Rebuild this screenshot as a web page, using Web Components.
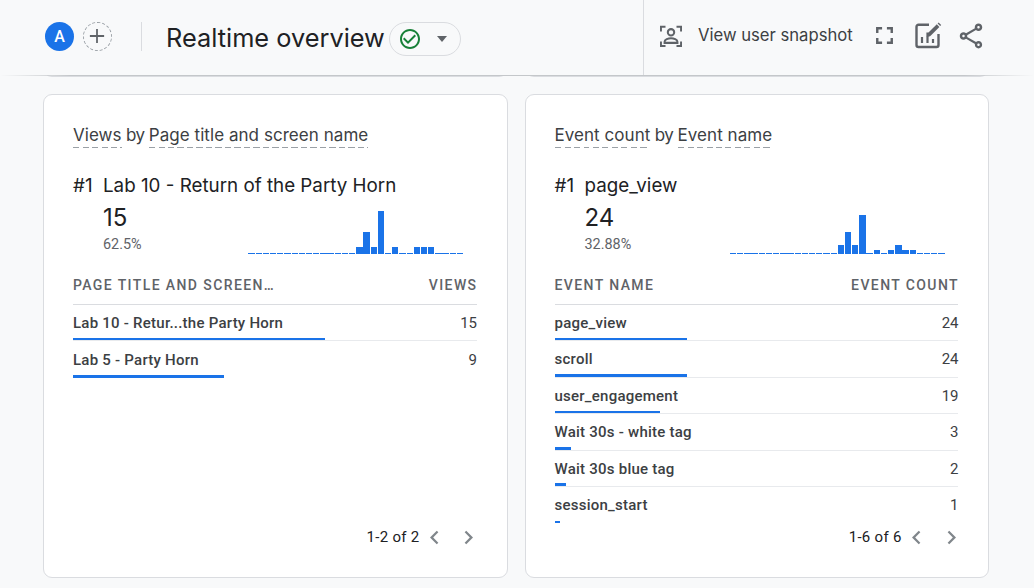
<!DOCTYPE html>
<html lang="en">
<head>
<meta charset="utf-8">
<title>Realtime overview</title>
<style>
  html,body{margin:0;height:588px;overflow:hidden;background:#f8f9fa;font-family:Roboto,sans-serif;}
</style>
</head>
<body>
<ga-header></ga-header>
<ga-main>
  <ga-stub></ga-stub><ga-stub></ga-stub>
  <ga-card metric="Views" dim="Page title and screen name" top="Lab 10 - Return of the Party Horn" value="15" pct="62.5%"
    head1="PAGE TITLE AND SCREEN…" head2="VIEWS" page="1-2 of 2" gap="36" shift="3"
    bars="0,0,0,0,0,0,0,0,0,0,0,0,0,0,0,7,22,7,43,0,7,0,0,7,7,7,0,0,0,0">
    <ga-row label="Lab 10 - Retur...the Party Horn" value="15" share="62.5"></ga-row>
    <ga-row label="Lab 5 - Party Horn" value="9" share="37.5" last></ga-row>
  </ga-card>
  <ga-card metric="Event count" dim="Event name" top="page_view" value="24" pct="32.88%"
    head1="EVENT NAME" head2="EVENT COUNT" page="1-6 of 6" gap="37.3" shift="5"
    bars="0,0,0,0,0,0,0,0,0,0,0,0,0,0,0,9,22,9,39,0,4,0,4,9,4,4,0,0,0,0">
    <ga-row label="page_view" value="24" share="32.88"></ga-row>
    <ga-row label="scroll" value="24" share="32.88"></ga-row>
    <ga-row label="user_engagement" value="19" share="26.03"></ga-row>
    <ga-row label="Wait 30s - white tag" value="3" share="4.11"></ga-row>
    <ga-row label="Wait 30s blue tag" value="2" share="2.74"></ga-row>
    <ga-row label="session_start" value="1" share="1.37" last></ga-row>
  </ga-card>
</ga-main>
<script>
const HEAD='Inter,"Open Sans",sans-serif';
class Base extends HTMLElement{
  render(html){ if(!this.shadowRoot) this.attachShadow({mode:'open'}); this.shadowRoot.innerHTML=html; }
  connectedCallback(){ this.draw(); }
  a(n){ return this.getAttribute(n)||''; }
}
customElements.define('ga-header',class extends Base{draw(){this.render(`<style>
  :host{display:flex;height:75px;position:relative;z-index:2;background:#f8f9fa;color:#202124;font-family:${HEAD};}
  :host::after{content:"";position:absolute;left:0;right:0;top:75px;height:1px;background:linear-gradient(90deg,rgba(189,193,198,0) 0,#c4c7ca 70px,#c4c7ca 964px,rgba(189,193,198,0) 100%);}
  .left{flex:1;display:flex;align-items:center;padding:0 0 0 45px;min-width:0;}
  .right{width:390px;border-left:1px solid #dadce0;display:flex;align-items:center;color:#3c4043;padding-bottom:4px;height:71px;}
  .av{width:29px;height:29px;border-radius:50%;background:#1a73e8;color:#fff;font:500 16px/29px Roboto,sans-serif;text-align:center;margin-top:-3px;}
  .add{width:27px;height:27px;border:1px dashed #9aa0a6;border-radius:50%;margin:-3px 0 0 9px;display:flex;align-items:center;justify-content:center;}
  .div{width:1px;height:29px;background:#dadce0;margin:-3px 24px 0 29px;}
  h1{margin:0;font:400 25.350px/34px ${HEAD};white-space:nowrap;}
  .pill{height:32px;border:1px solid #dadce0;border-radius:17px;margin:3px 0 0 4px;display:flex;align-items:center;padding-left:8px;width:62px;}
  .caret{width:0;height:0;border:5px solid transparent;border-top:6px solid #5f6368;border-bottom:0;margin-left:15px;}
  svg{display:block;flex:none;fill:#5f6368;}
  .snap{margin-left:16px;}
  .txt{font:400 16.650px/24px ${HEAD};margin:-2px 0 0 16px;white-space:nowrap;}
  .fs{margin-left:17px;} .ed{margin-left:16px;} .sh{margin-left:14px;}
</style>
<div class="left">
  <div class="av">A</div>
  <div class="add"><svg width="16" height="16" viewBox="0 0 18 18" style="margin-left:-1px"><path d="M8 1h2v7h7v2h-7v7H8v-7H1V8h7z"/></svg></div>
  <div class="div"></div>
  <h1>Realtime overview</h1>
  <div class="pill"><svg width="24" height="24" viewBox="0 0 24 24" style="fill:#188038"><path d="M16.59 7.58 10 14.17l-3.59-3.58L5 12l5 5 8-8zM12 2C6.48 2 2 6.48 2 12s4.48 10 10 10 10-4.48 10-10S17.520 2 12 2zm0 18c-4.420 0-8-3.580-8-8s3.580-8 8-8 8 3.580 8 8-3.580 8-8 8z"/></svg><span class="caret"></span></div>
</div>
<div class="right">
  <svg class="snap" width="22" height="22" viewBox="0 0 24 24" style="fill:none;stroke:#5f6368;stroke-width:2.200"><path d="M1 7V2h5M18 2h5v5M1 18v5h5M23 18v5h-5"/><circle cx="12" cy="8" r="3.500"/><path d="M5 19.500v-1.200c0-2.400 4-3.800 7-3.800s7 1.400 7 3.800v1.200z"/></svg>
  <span class="txt">View user snapshot</span>
  <svg class="fs" width="29" height="29" viewBox="0 0 24 24"><path d="M7 14H5v5h5v-2H7v-3zm-2-4h2V7h3V5H5v5zm12 7h-3v2h5v-5h-2v3zM14 5v2h3v3h2V5h-5z"/></svg>
  <svg class="ed" width="27" height="27" viewBox="0 0 27 27" style="fill:none;stroke:#5f6368;stroke-width:2.400"><path d="M14 2.700H3.500a2 2 0 0 0-2 2V23a2 2 0 0 0 2 2H21.500a2 2 0 0 0 2-2V12" stroke-linejoin="round"/><path d="M7 21v-6M12.500 21V10.500M18 21v-4" stroke-width="2.200"/><path d="M12.500 11.500 21.800 2.300l2.600 2.600-9.300 9.300-3.400.8z" fill="#5f6368" stroke="none"/><path d="M22.600 1.500l1-1 2.600 2.600-1 1z" fill="#5f6368" stroke="none"/></svg>
  <svg class="sh" width="30" height="30" viewBox="0 0 24 24"><path d="M18 16.080c-.76 0-1.440.3-1.960.77L8.910 12.700c.05-.23.09-.46.09-.7s-.04-.47-.09-.7l7.050-4.110c.54.5 1.250.81 2.040.81 1.660 0 3-1.340 3-3s-1.340-3-3-3-3 1.340-3 3c0 .24.04.47.09.7L8.040 9.810C7.500 9.310 6.790 9 6 9c-1.660 0-3 1.340-3 3s1.340 3 3 3c.79 0 1.500-.31 2.040-.81l7.120 4.160c-.05.21-.08.43-.08.65 0 1.610 1.310 2.920 2.920 2.920 1.610 0 2.920-1.310 2.920-2.920s-1.310-2.920-2.920-2.920zM18 4c.55 0 1 .45 1 1s-.45 1-1 1-1-.45-1-1 .45-1 1-1zM6 13c-.55 0-1-.45-1-1s.45-1 1-1 1 .45 1 1-.45 1-1 1zm12 7.020c-.55 0-1-.45-1-1s.45-1 1-1 1 .45 1 1-.45 1-1 1z"/></svg>
</div>`);}});
customElements.define('ga-main',class extends Base{draw(){this.render(`<style>
  :host{display:grid;grid-template-columns:1fr 1fr;column-gap:17px;padding:0 45px 0 43px;}
</style><slot></slot>`);}});
customElements.define('ga-stub',class extends Base{draw(){this.render(`<style>
  :host{display:block;height:10px;margin:-8px 0 17px;box-sizing:border-box;background:#fff;border:1px solid #dadce0;border-radius:0 0 9px 9px;}
</style>`);}});
customElements.define('ga-spark',class extends Base{draw(){
  const bars=this.a('bars').split(',').map(Number);
  this.render(`<style>
  :host{display:grid;grid-template-columns:repeat(30,7.2px);align-items:end;width:216px;height:44px;margin-left:.4px;}
  i{display:block;width:6.300px;background:#1a73e8;}
</style>${bars.map(h=>`<i style="height:${h||1}px"></i>`).join('')}`);}});
customElements.define('ga-row',class extends Base{draw(){this.render(`<style>
  :host{display:flex;flex-direction:column;height:36.4px;box-sizing:border-box;color:#3c4043;font:15px/20px Roboto,sans-serif;${this.hasAttribute('last')?'':'border-bottom:1px solid #e8eaed;'}}
  .t{flex:1;display:flex;justify-content:space-between;align-items:center;padding-top:3px;}
  b{font-weight:500;white-space:nowrap;letter-spacing:.24px;}
  span{margin-right:-.5px;}
  .bar{height:2.5px;background:#1a73e8;flex:none;}
</style><div class="t"><b>${this.a('label')}</b><span>${this.a('value')}</span></div><div class="bar" style="width:${this.a('share')}%"></div>`);}});
customElements.define('ga-card',class extends Base{draw(){this.render(`<style>
  :host{display:flex;flex-direction:column;height:484px;box-sizing:border-box;background:#fff;border:1px solid #dadce0;border-radius:9px;padding:28px 30px 28px 29px;color:#202124;}
  .title{display:flex;font:400 17px/24px ${HEAD};color:#3c4043;height:25px;white-space:nowrap;}
  .title u{text-decoration:none;height:25px;letter-spacing:.05px;background:repeating-linear-gradient(90deg,#9aa0a6 0 6px,transparent 6px 9.500px) left bottom/100% 1px no-repeat;}
  .title span{white-space:pre;letter-spacing:-.5px;}
  .rank{display:flex;margin-top:26px;font:400 18.800px/24px ${HEAD};white-space:nowrap;}
  .rank span:first-child{width:30px;}
  .stat{display:flex;align-items:flex-end;height:52px;margin-top:4px;padding-left:30px;}
  .nums{width:145px;flex:none;align-self:flex-start;}
  .num{font:400 24px/32px ${HEAD};}
  .pct{font:400 14.400px/20px Roboto,sans-serif;color:#5f6368;margin-top:1px;}
  .hd{display:flex;justify-content:space-between;align-items:flex-end;height:51px;box-sizing:border-box;padding-bottom:9px;border-bottom:1px solid #dadce0;font:500 14px/20px Roboto,sans-serif;letter-spacing:1.400px;color:#5f6368;white-space:nowrap;}
  .hd span:last-child{margin-right:-1px;}
  .ft{margin-top:auto;height:24px;display:flex;align-items:center;justify-content:flex-end;font:15px/20px Roboto,sans-serif;letter-spacing:.3px;color:#202124;margin-right:-${this.a('shift')}px;}
  .ft svg{display:block;fill:#80868b;flex:none;margin:0 -2px;}
</style>
<div class="title"><u>${this.a('metric')}</u><span> by </span><u>${this.a('dim')}</u></div>
<div class="rank"><span>#1</span><span>${this.a('top')}</span></div>
<div class="stat"><div class="nums"><div class="num">${this.a('value')}</div><div class="pct">${this.a('pct')}</div></div><ga-spark bars="${this.a('bars')}"></ga-spark></div>
<div class="hd"><span>${this.a('head1')}</span><span>${this.a('head2')}</span></div>
<slot></slot>
<div class="ft"><span style="margin-right:3px">${this.a('page')}</span>
<svg width="27" height="27" viewBox="0 0 24 24"><path d="M15.410 7.410 14 6l-6 6 6 6 1.410-1.410L10.830 12z"/></svg>
<svg style="margin-left:${+this.a('gap')-27}px" width="27" height="27" viewBox="0 0 24 24"><path d="M10 6 8.590 7.410 13.170 12l-4.580 4.590L10 18l6-6z"/></svg></div>`);}});
</script>
</body>
</html>
